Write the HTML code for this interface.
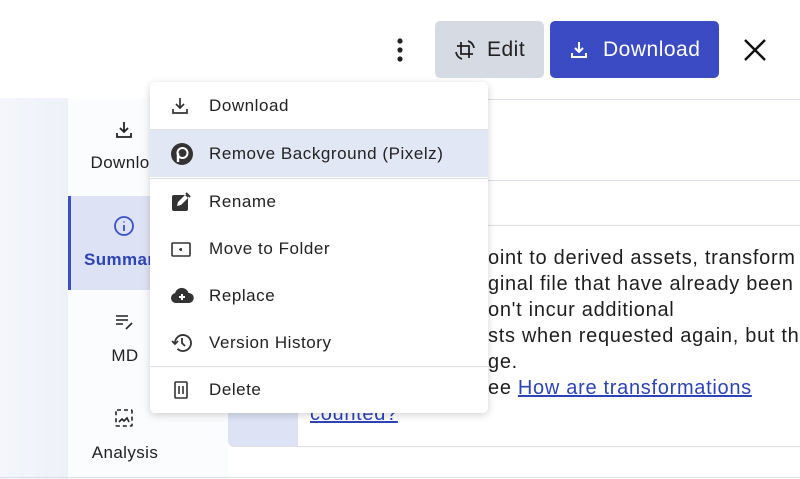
<!DOCTYPE html>
<html><head><style>
*{margin:0;padding:0;box-sizing:border-box}
body{width:800px;height:479px;overflow:hidden;background:#fff;font-family:"Liberation Sans",sans-serif;position:relative;color:#222}
.abs{position:absolute}
.topbar{left:0;top:0;width:800px;height:98px;background:#fff}
.leftbg{left:0;top:98px;width:68px;height:381px;background:linear-gradient(90deg,#f4f6fb,#eef1f8)}
.side{left:68px;top:98px;width:160px;height:381px;background:#fbfcfe}
.sel{left:68px;top:196px;width:90px;height:94px;background:#dde3f4;border-left:3px solid #3b50c8}
.slabel{font-size:17px;color:#222;text-align:center;width:110px;letter-spacing:0.4px}
.content{left:228px;top:98px;width:572px;height:381px;background:#fff}
.hl{height:1px;background:#dcdfe5}
.btn{border-radius:5px;font-size:21px;display:flex;align-items:center;letter-spacing:0.5px}
.menu{left:150px;top:82px;width:338px;height:331px;background:#fff;border-radius:5px;box-shadow:0 2px 8px rgba(0,0,0,.18)}
.item{position:absolute;left:0;width:338px;height:47px;display:flex;align-items:center;font-size:17px;color:#222;letter-spacing:0.55px}
.item svg{position:absolute;left:20px}
.item span{position:absolute;left:59px}
.txt{font-size:20px;color:#1e1e1e;line-height:26px;letter-spacing:0.7px}
a{color:#2d43b8;text-decoration:underline}
</style></head><body>
<div class="abs topbar"></div>
<div class="abs leftbg"></div>
<div class="abs side"></div>
<div class="abs sel"></div>
<svg class="abs" style="left:114px;top:120px" width="20" height="20" viewBox="0 0 20 20" fill="none" stroke="#222" stroke-width="1.8"><path d="M10 2v10M6 8l4 4 4-4M3 13v4h14v-4"/></svg>
<div class="abs slabel" style="left:70px;top:153px">Downloa</div>
<svg class="abs" style="left:113px;top:215px" width="22" height="22" viewBox="0 0 22 22" fill="none" stroke="#3b50c8" stroke-width="1.8"><circle cx="11" cy="11" r="9"/><path d="M11 10v6M11 6.5v1"/></svg>
<div class="abs slabel" style="left:72px;top:250px;color:#2d43b8;font-weight:bold;text-align:left;padding-left:12px">Summar</div>
<svg class="abs" style="left:114px;top:313px" width="22" height="20" viewBox="0 0 22 20" fill="none" stroke="#222" stroke-width="1.6"><path d="M2 3h12M2 7h12M2 11h7M12 16l6-6"/></svg>
<div class="abs slabel" style="left:70px;top:346px">MD</div>
<svg class="abs" style="left:114px;top:408px" width="20" height="20" viewBox="0 0 20 20" fill="none" stroke="#222" stroke-width="1.6"><rect x="2" y="2" width="16" height="16" rx="1" stroke-dasharray="4 3"/><path d="M5 14l3-3 2 2 3-3 2 4"/></svg>
<div class="abs slabel" style="left:70px;top:443px">Analysis</div>
<div class="abs content"></div>
<div class="abs hl" style="left:488px;top:99px;width:312px"></div>
<div class="abs hl" style="left:488px;top:180px;width:312px"></div>
<div class="abs hl" style="left:488px;top:225px;width:312px"></div>
<div class="abs" style="left:228px;top:226px;width:572px;height:221px;border-bottom:1px solid #dcdfe5;border-radius:0 0 0 6px;background:linear-gradient(90deg,#dde3f4 0 70px,#fff 70px)"></div>
<div class="abs hl" style="left:0;top:477px;width:800px"></div>
<div class="abs txt" style="left:488px;top:245px;white-space:nowrap">oint to derived assets, transform<br>ginal file that have already been<br>on't incur additional<br>sts when requested again, but th<br>ge.<br>ee <a>How are transformations</a></div>
<div class="abs txt" style="left:310px;top:401px"><a>counted?</a></div>
<svg class="abs" style="left:394px;top:37px" width="12" height="26" viewBox="0 0 12 26" fill="#222"><circle cx="6" cy="4" r="2.6"/><circle cx="6" cy="13" r="2.6"/><circle cx="6" cy="22" r="2.6"/></svg>
<div class="abs btn" style="left:435px;top:21px;width:109px;height:57px;background:#d6dbe3;color:#222"><svg style="margin-left:18px" width="24" height="24" viewBox="0 0 24 24" fill="none" stroke="#222" stroke-width="1.8"><path d="M8 4v12h12M4 8h12v12"/><path d="M3 14a9 9 0 0 0 6 7M21 10a9 9 0 0 0-6-7"/></svg><span style="margin-left:10px">Edit</span></div>
<div class="abs btn" style="left:550px;top:21px;width:169px;height:57px;background:#3a4bc4;color:#fff"><svg style="margin-left:19px" width="20" height="20" viewBox="0 0 20 20" fill="none" stroke="#fff" stroke-width="2"><path d="M10 2v10M6 8l4 4 4-4M3 13v4h14v-4"/></svg><span style="margin-left:14px">Download</span></div>
<svg class="abs" style="left:742px;top:37px" width="26" height="26" viewBox="0 0 26 26" stroke="#111" stroke-width="2.4"><path d="M3 3l20 20M23 3L3 23"/></svg>
<div class="abs menu">
<div class="item" style="top:0"><svg width="20" height="20" viewBox="0 0 20 20" fill="none" stroke="#333" stroke-width="1.7"><path d="M10 2v10M6 8l4 4 4-4M3 13v4h14v-4"/></svg><span>Download</span></div>
<div class="hl" style="position:absolute;top:47px;width:338px"></div>
<div class="item" style="top:48px;background:#e2e7f5"><svg width="24" height="24" viewBox="0 0 24 24"><circle cx="12" cy="12" r="11" fill="#333"/><circle cx="12.5" cy="11" r="5" fill="none" stroke="#fff" stroke-width="2"/><path d="M8 11v9" stroke="#fff" stroke-width="2.4"/></svg><span>Remove Background (Pixelz)</span></div>
<div class="hl" style="position:absolute;top:96px;width:338px"></div>
<div class="item" style="top:96px"><svg width="22" height="22" viewBox="0 0 22 22"><rect x="2" y="4" width="16" height="16" rx="2" fill="#333"/><path d="M7 15l1-4 7-7 3 3-7 7z" fill="#fff"/><path d="M16 2l4 4" stroke="#333" stroke-width="2"/></svg><span>Rename</span></div>
<div class="item" style="top:143px"><svg width="22" height="22" viewBox="0 0 22 22" fill="none" stroke="#333" stroke-width="1.6"><rect x="2" y="5" width="18" height="13" rx="1"/><path d="M9 11.5h3M11 10v3"/></svg><span>Move to Folder</span></div>
<div class="item" style="top:190px"><svg width="24" height="20" viewBox="0 0 24 20"><path d="M6 17a5 5 0 0 1-1-9.9A7 7 0 0 1 18.5 7 4.8 4.8 0 0 1 19 17z" fill="#333"/><path d="M12 8v6M9 11h6" stroke="#fff" stroke-width="2"/></svg><span>Replace</span></div>
<div class="item" style="top:237px"><svg width="24" height="24" viewBox="0 0 24 24" fill="none" stroke="#333" stroke-width="1.8"><path d="M5 12a8 8 0 1 1 2.5 5.8"/><path d="M2 10l3 3 3-3M12 7v5l3 3"/></svg><span>Version History</span></div>
<div class="hl" style="position:absolute;top:284px;width:338px"></div>
<div class="item" style="top:284px"><svg width="22" height="22" viewBox="0 0 22 22" fill="none" stroke="#333" stroke-width="1.6"><rect x="5" y="3" width="12" height="16" rx="1"/><path d="M9 7v8M13 7v8"/></svg><span>Delete</span></div>
</div>
</body></html>
